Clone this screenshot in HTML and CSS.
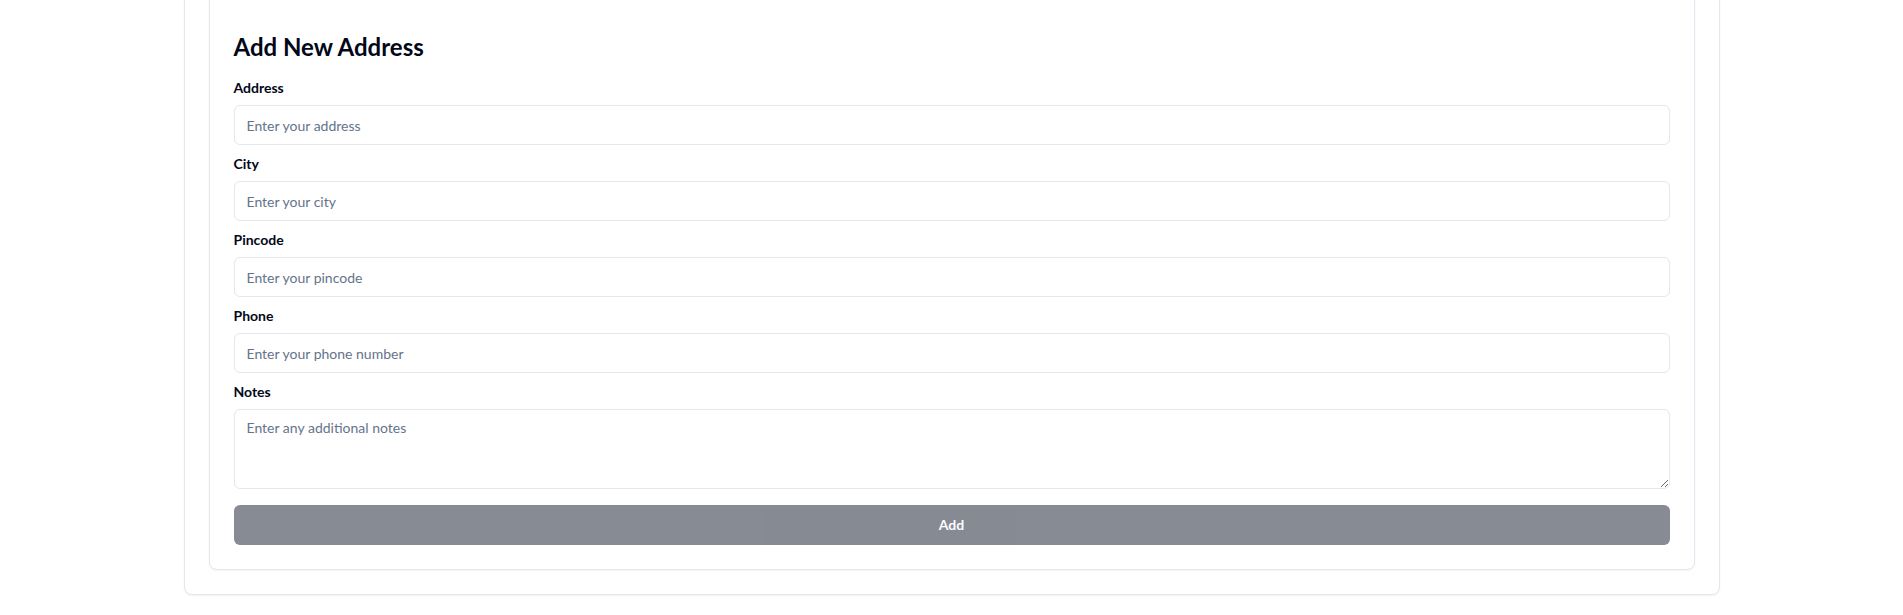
FILE: index.html
```html
<!DOCTYPE html>
<html lang="en">
<head>
<meta charset="utf-8">
<title>Add New Address</title>
<link rel="stylesheet" href="styles.css">
</head>
<body>
<main class="page">
  <section class="outer-card">
    <div class="inner-card">
      <h2 class="title">Add New Address</h2>
      <form class="form">
        <div class="field">
          <label class="label" for="address">Address</label>
          <input class="input" id="address" type="text" placeholder="Enter your address">
        </div>
        <div class="field">
          <label class="label" for="city">City</label>
          <input class="input" id="city" type="text" placeholder="Enter your city">
        </div>
        <div class="field">
          <label class="label" for="pincode">Pincode</label>
          <input class="input" id="pincode" type="text" placeholder="Enter your pincode">
        </div>
        <div class="field">
          <label class="label" for="phone">Phone</label>
          <input class="input" id="phone" type="text" placeholder="Enter your phone number">
        </div>
        <div class="field">
          <label class="label" for="notes">Notes</label>
          <textarea class="input textarea" id="notes" placeholder="Enter any additional notes"></textarea>
        </div>
        <button class="submit" type="submit" disabled>Add</button>
      </form>
    </div>
  </section>
</main>
</body>
</html>
```

FILE: styles.css
```css
* {
  box-sizing: border-box;
}

html, body {
  margin: 0;
  padding: 0;
  background: #ffffff;
}

body {
  font-family: "Lato", "Noto Sans", sans-serif;
  color: #020817;
}

.page {
  max-width: 1536px;
  margin: -46px auto 0;
  padding-bottom: 20px;
}

.outer-card {
  border: 1px solid #e2e8f0;
  border-radius: 8px;
  background: #fff;
  box-shadow: 0 1px 2px 0 rgba(0, 0, 0, 0.06);
  padding: 24px;
}

.inner-card {
  border: 1px solid #e2e8f0;
  border-radius: 8px;
  background: #fff;
  box-shadow: 0 1px 2px 0 rgba(0, 0, 0, 0.05);
  padding: 24px;
}

.title {
  margin: 27px 0 14px;
  font-size: 24px;
  line-height: 32px;
  font-weight: 700;
  color: #020817;
}

.form {
  display: flex;
  flex-direction: column;
  gap: 8px;
}

.field {
  display: flex;
  flex-direction: column;
}

.label {
  display: block;
  font-size: 14px;
  line-height: 20px;
  font-weight: 700;
  padding-top: 1px;
  margin-bottom: 7px;
  color: #020817;
}

.input {
  display: block;
  width: 100%;
  height: 40px;
  border: 1px solid #e2e8f0;
  border-radius: 6px;
  background: #fff;
  padding: 8px 12px;
  font-family: inherit;
  font-size: 14px;
  line-height: 20px;
  color: #020817;
  outline: none;
}

.input::placeholder {
  color: #64748b;
  opacity: 1;
}

.textarea {
  height: 80px;
  min-height: 80px;
  resize: vertical;
}

.submit {
  margin-top: 8px;
  height: 40px;
  width: 100%;
  border: none;
  border-radius: 6px;
  background: #0f172a;
  opacity: 0.5;
  color: #f8fafc;
  font-family: inherit;
  font-size: 14px;
  line-height: 20px;
  font-weight: 700;
  cursor: default;
}
```
